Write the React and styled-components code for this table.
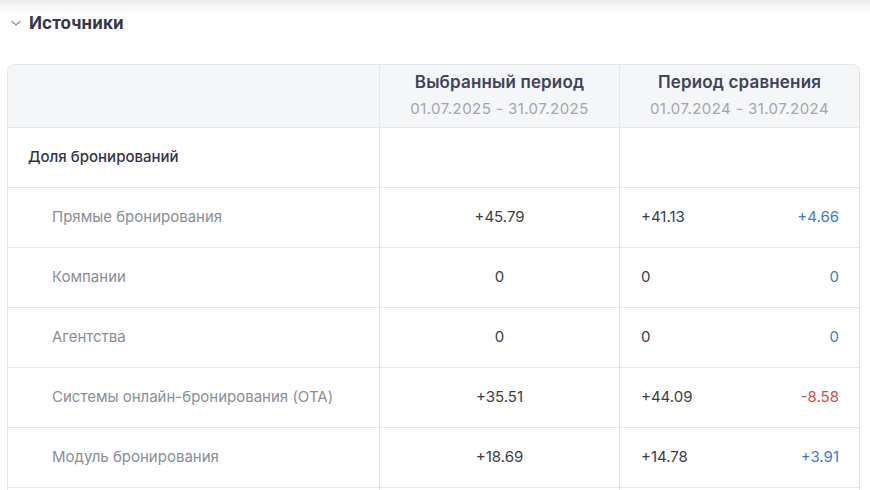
import React from "react";
import styled, { createGlobalStyle } from "styled-components";

const Global = createGlobalStyle`
  html, body { margin: 0; padding: 0; background: #fff; }
  body {
    font-family: Inter, "Noto Sans", "Liberation Sans", sans-serif;
    -webkit-font-smoothing: antialiased;
  }
`;

const Page = styled.div`
  width: 870px;
  height: 490px;
  overflow: hidden;
  background: linear-gradient(to bottom, #e9eaed 0px, #f6f6f8 6px, #ffffff 14px);
`;

const Header = styled.div`
  display: flex;
  align-items: center;
  gap: 7px;
  height: 46px;
  padding-left: 10px;
`;

const Title = styled.h2`
  margin: 0;
  font-size: 17px;
  font-weight: 700;
  color: #363848;
  letter-spacing: 0.1px;
`;

const Table = styled.div`
  margin: 18px 10px 0 7px;
  display: grid;
  grid-template-columns: 372px 240px 1fr;
  border: 1px solid #e4e5e9;
  border-bottom: none;
  border-radius: 8px 8px 0 0;
  overflow: hidden;
`;

const Cell = styled.div`
  box-sizing: border-box;
  height: ${(p) => (p.$head ? "63px" : "60px")};
  background: ${(p) => (p.$head ? "#f5f6f8" : "#fff")};
  border-bottom: 1px solid #e6e7eb;
  border-right: ${(p) => (p.$last ? "none" : "1px solid #e4e5e9")};
  display: flex;
  align-items: center;
  font-size: 15px;
`;

const HeadCell = styled(Cell)`
  flex-direction: column;
  justify-content: center;
  gap: 7px;
  padding-bottom: 2px;
`;

const HeadTitle = styled.div`
  font-size: 17px;
  font-weight: 600;
  color: #40435a;
  letter-spacing: 0.15px;
`;

const HeadDate = styled.div`
  font-size: 15px;
  color: #a2a5ae;
  letter-spacing: 0.45px;
`;

const Label = styled(Cell)`
  padding-left: ${(p) => (p.$sub ? "44px" : "20px")};
  color: ${(p) => (p.$sub ? "#8b8e98" : "#33354a")};
  font-weight: ${(p) => (p.$sub ? 400 : 500)};
  padding-bottom: 2px;
`;

const Value = styled(Cell)`
  justify-content: center;
  color: #3b3d48;
  padding-bottom: 2px;
`;

const Compare = styled(Cell)`
  justify-content: space-between;
  padding: 0 20px 2px 21px;
  color: #3b3d48;
`;

const Diff = styled.span`
  color: ${(p) => (p.$neg ? "#d4503f" : "#3f7ad6")};
`;

const rows = [
  { label: "Прямые бронирования", cur: "+45.79", prev: "+41.13", diff: "+4.66" },
  { label: "Компании", cur: "0", prev: "0", diff: "0" },
  { label: "Агентства", cur: "0", prev: "0", diff: "0" },
  { label: "Системы онлайн-бронирования (OTA)", cur: "+35.51", prev: "+44.09", diff: "-8.58", neg: true },
  { label: "Модуль бронирования", cur: "+18.69", prev: "+14.78", diff: "+3.91" },
  { label: "", cur: "", prev: "", diff: "" },
];

const Chevron = () => (
  <svg width="12" height="12" viewBox="0 0 12 12" fill="none">
    <path d="M2 4.5 L6 8 L10 4.5" stroke="#8d909a" strokeWidth="1.2" strokeLinecap="round" strokeLinejoin="round" />
  </svg>
);

export default function App() {
  return (
    <Page>
      <Global />
      <Header>
        <Chevron />
        <Title>Источники</Title>
      </Header>
      <Table>
        <HeadCell $head />
        <HeadCell $head>
          <HeadTitle>Выбранный период</HeadTitle>
          <HeadDate>01.07.2025 - 31.07.2025</HeadDate>
        </HeadCell>
        <HeadCell $head $last>
          <HeadTitle>Период сравнения</HeadTitle>
          <HeadDate>01.07.2024 - 31.07.2024</HeadDate>
        </HeadCell>

        <Label>Доля бронирований</Label>
        <Value />
        <Compare $last />

        {rows.map((r, i) => (
          <React.Fragment key={i}>
            <Label $sub>{r.label}</Label>
            <Value>{r.cur}</Value>
            <Compare $last>
              <span>{r.prev}</span>
              <Diff $neg={r.neg}>{r.diff}</Diff>
            </Compare>
          </React.Fragment>
        ))}
      </Table>
    </Page>
  );
}
